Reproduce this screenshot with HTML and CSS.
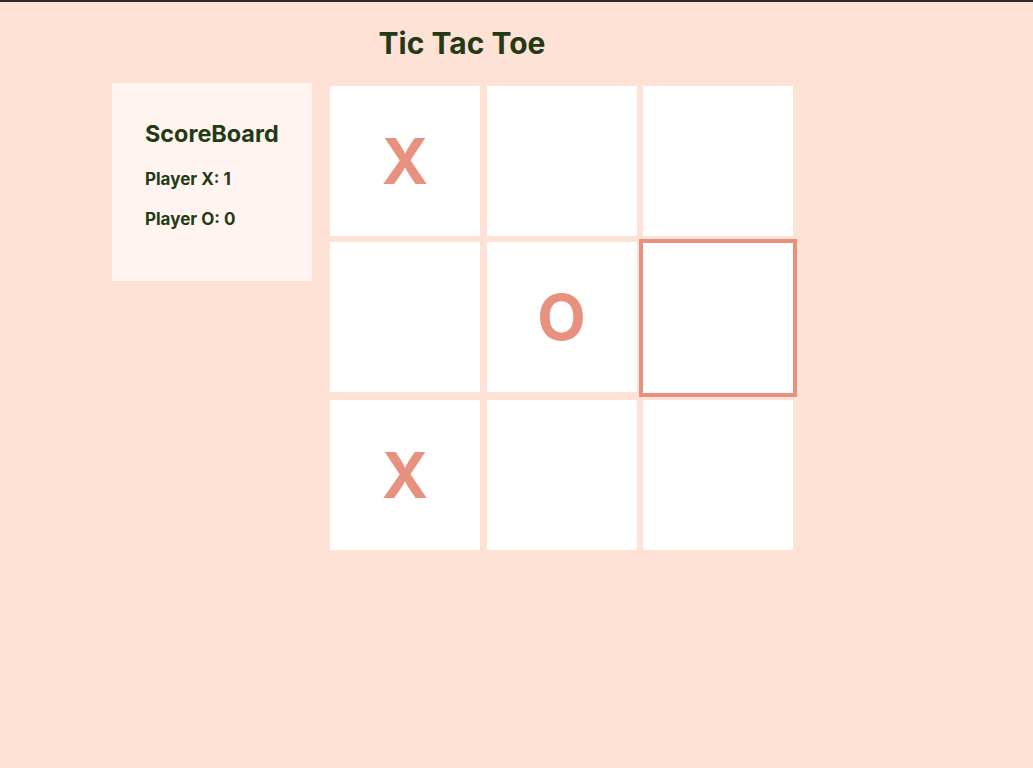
FILE: index.html
```html
<!DOCTYPE html>
<html>
<head>
<meta charset="utf-8">
<title>Tic Tac Toe</title>
<link rel="stylesheet" href="styles.css">
</head>
<body>
<div class="app">
  <h1 class="title">Tic Tac Toe</h1>
  <div class="game">
    <div class="scoreboard">
      <h2 class="score-title">ScoreBoard</h2>
      <p class="score-line">Player X: 1</p>
      <p class="score-line">Player O: 0</p>
    </div>
    <div class="board">
      <div class="cell">X</div>
      <div class="cell"></div>
      <div class="cell"></div>
      <div class="cell"></div>
      <div class="cell">O</div>
      <div class="cell cell-active"></div>
      <div class="cell">X</div>
      <div class="cell"></div>
      <div class="cell"></div>
    </div>
  </div>
</div>
</body>
</html>
```
FILE: styles.css
```css
html, body {
  margin: 0;
  padding: 0;
}
body {
  background: #ffe2d6;
  border-top: 2px solid #2a2a2a;
  min-height: 766px;
  font-family: Inter, "Noto Sans", sans-serif;
  color: #243a16;
}
.app {
  width: 700px;
  margin-left: 112px;
}
.title {
  margin: 0;
  padding-top: 23px;
  height: 81px;
  box-sizing: border-box;
  text-align: center;
  font-size: 30px;
  font-weight: 700;
  line-height: 36px;
}
.game {
  display: flex;
  align-items: flex-start;
  gap: 18px;
}
.scoreboard {
  width: 200px;
  height: 198px;
  box-sizing: border-box;
  background: #fff4f0;
  padding: 37px 33px 0;
}
.score-title {
  margin: 0 0 21px;
  font-size: 23.4px;
  line-height: 28px;
  font-weight: 700;
}
.score-line {
  margin: 0 0 20px;
  font-size: 17px;
  line-height: 20px;
  font-weight: 700;
}
.board {
  margin-top: 3px;
  display: grid;
  grid-template-columns: repeat(3, 150px);
  align-items: start;
  gap: 6px 6.5px;
}
.cell {
  height: 150px;
  background: #ffffff;
  display: flex;
  align-items: center;
  justify-content: center;
  font-size: 63px;
  font-weight: 700;
  color: #e8917e;
  line-height: 1;
}
.cell-active {
  margin: 1px 0;
  outline: 4px solid #e8917e;
}
```
